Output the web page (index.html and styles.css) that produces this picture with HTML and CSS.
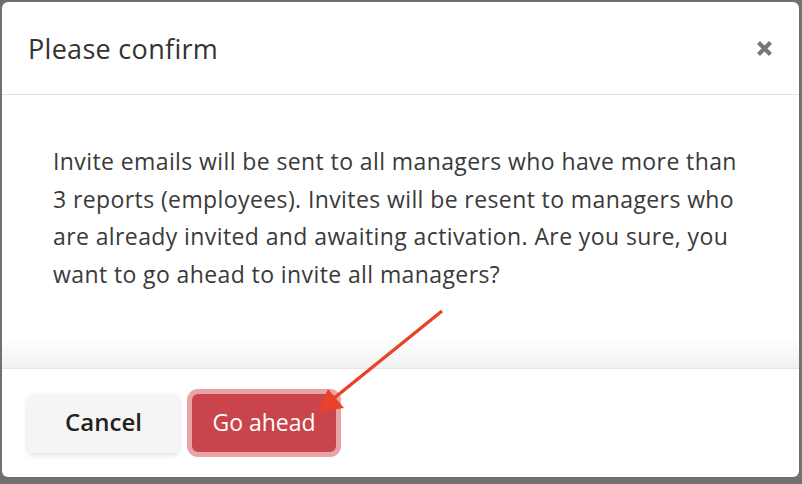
FILE: index.html
```html
<!DOCTYPE html>
<html lang="en">
<head>
<meta charset="utf-8">
<title>Please confirm</title>
<link rel="stylesheet" href="styles.css">
</head>
<body>
<div class="dialog">
  <div class="dialog-header">
    <h1 class="dialog-title">Please confirm</h1>
    <button class="close" aria-label="Close">
      <svg width="17" height="17" viewBox="0 0 17 17"><path d="M2.5 2.5L14.5 14.5M14.5 2.5L2.5 14.5" stroke="#777" stroke-width="4.2" stroke-linecap="butt"/></svg>
    </button>
  </div>
  <div class="dialog-body">
    <p class="message">Invite emails will be sent to all managers who have more than<br>3 reports (employees). Invites will be resent to managers who<br>are already invited and awaiting activation. Are you sure, you<br>want to go ahead to invite all managers?</p>
  </div>
  <div class="dialog-footer">
    <button class="btn btn-cancel">Cancel</button>
    <button class="btn btn-primary">Go ahead</button>
  </div>
  <svg class="annotation" width="802" height="484" viewBox="0 0 802 484">
    <line x1="442" y1="311" x2="333" y2="399" stroke="#e8432a" stroke-width="3.4"/>
    <polygon points="318,412 328,389 344,408" fill="#e8432a"/>
  </svg>
</div>
</body>
</html>
```
FILE: styles.css
```css
html, body {
  margin: 0;
  padding: 0;
}
body {
  background: #707070;
  width: 802px;
  height: 484px;
  overflow: hidden;
  font-family: "Open Sans", "Noto Sans", sans-serif;
}
.dialog {
  position: relative;
  margin: 2px 3px 0 2px;
  height: 475px;
  background: #fff;
  border-radius: 6px;
  display: flex;
  flex-direction: column;
  overflow: hidden;
}
.dialog-header {
  height: 92px;
  border-bottom: 1px solid #e2e2e2;
  display: flex;
  align-items: center;
  justify-content: space-between;
  padding: 0 26px 0 26px;
  flex: none;
}
.dialog-title {
  margin: 0;
  font-size: 27px;
  font-weight: 500;
  color: #333;
  letter-spacing: 0.3px;
}
.close {
  border: 0;
  background: none;
  padding: 0;
  width: 17px;
  height: 17px;
  display: block;
  cursor: pointer;
}
.close svg { display: block; }
.dialog-body {
  flex: 1;
  padding: 0 0 0 51px;
  background: linear-gradient(to bottom, #fff calc(100% - 30px), #f1f1f1 100%);
  border-bottom: 1px solid #e6e6e6;
}
.message {
  margin: 48px 0 0 0;
  font-size: 23px;
  letter-spacing: 0.4px;
  line-height: 37.6px;
  color: #3a3a3a;
}
.dialog-footer {
  height: 108px;
  flex: none;
  display: flex;
  align-items: center;
  gap: 13px;
  padding: 0 26px;
}
.btn {
  font-family: inherit;
  border: 0;
  border-radius: 6px;
  height: 59px;
  padding: 0 0 3px 0;
  cursor: pointer;
}
.btn-cancel {
  width: 151px;
  background: #f5f5f5;
  color: #222;
  font-size: 24px;
  font-weight: 600;
  box-shadow: 0 2px 6px rgba(0,0,0,0.13);
}
.btn-primary {
  width: 144px;
  height: 58px;
  background: #c9444b;
  color: #fff;
  font-size: 23px;
  font-weight: 500;
  box-shadow: 0 0 0 5px #e8a4a7;
}
.annotation {
  position: absolute;
  left: -2px;
  top: -2px;
  pointer-events: none;
}
```
